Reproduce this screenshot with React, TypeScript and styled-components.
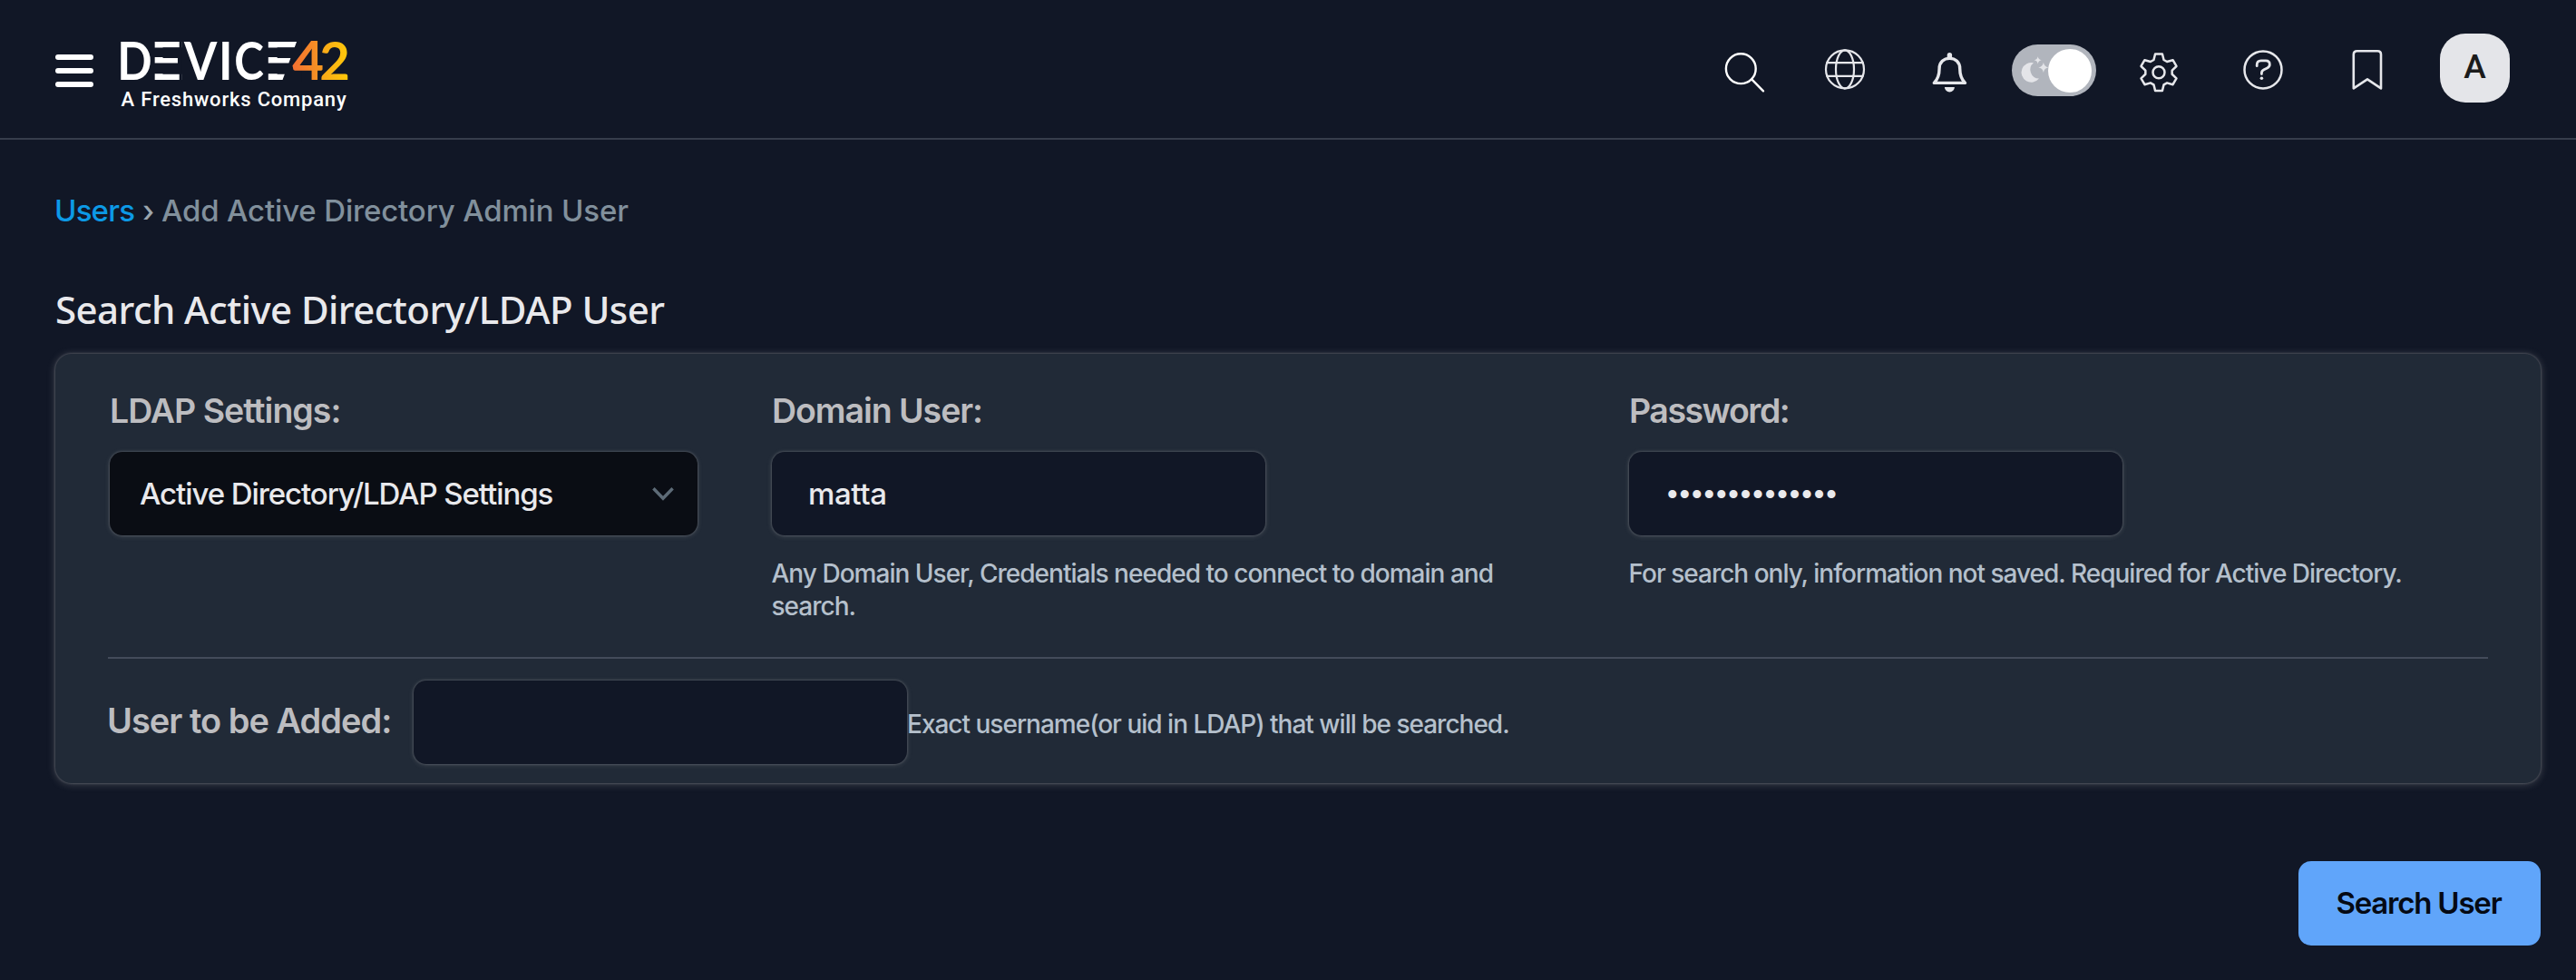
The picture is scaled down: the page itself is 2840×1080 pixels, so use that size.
import React from "react";
import styled, { createGlobalStyle } from "styled-components";

const color = {
  page: "#111726",
  card: "#212a37",
  line: "#363d4b",
  divider: "#434b5a",
  label: "#bdbdc0",
  text: "#e9e9ec",
  help: "#b5c0cc",
  icon: "#e6e7eb",
  link: "#0c9ae6",
  muted: "#81909c",
  select: "#0a0d14",
  primary: "#60a5fa",
};

const sans = `Inter, "Open Sans", sans-serif`;

const GlobalStyle = createGlobalStyle`
  *, *::before, *::after { box-sizing: border-box; }
  body { margin: 0; background: ${color.page}; font-family: ${sans}; color: ${color.text}; }
`;

const Page = styled.div`
  min-height: 1080px;
  display: flex;
  flex-direction: column;
  background: ${color.page};
`;

const Header = styled.header`
  height: 154px;
  border-bottom: 2px solid ${color.line};
  display: flex;
  align-items: center;
  padding: 0 73px 0 61px;
`;

const MenuButton = styled.button`
  display: flex;
  flex-direction: column;
  gap: 9px;
  width: 42px;
  margin: 4px 27px 0 0;
  padding: 0;
  border: 0;
  background: none;
`;

const MenuBar = styled.span`
  height: 6px;
  border-radius: 3px;
  background: #fff;
`;

const LogoSvg = styled.svg`
  display: block;
  margin-top: 8px;
  overflow: visible;
`;

const Actions = styled.nav`
  display: flex;
  align-items: center;
  margin-left: auto;
`;

const IconButton = styled.button<{ $after: number }>`
  display: block;
  width: 48px;
  height: 48px;
  margin: 0 ${(p) => p.$after}px 0 0;
  padding: 0;
  border: 0;
  background: none;
  color: ${color.icon};

  svg {
    display: block;
    overflow: visible;
  }
`;

const Toggle = styled.button`
  display: flex;
  align-items: center;
  width: 93px;
  height: 57px;
  margin: 3px 45px 0 0;
  padding: 0;
  border: 0;
  border-radius: 29px;
  background: #b1b5bd;

  svg {
    display: block;
    flex: none;
    overflow: visible;
  }
`;

const Knob = styled.span`
  flex: none;
  width: 48px;
  height: 48px;
  border-radius: 50%;
  background: #fff;
`;

const Avatar = styled.div`
  display: flex;
  align-items: center;
  justify-content: center;
  width: 77px;
  height: 76px;
  margin-top: -2px;
  padding-bottom: 3px;
  border-radius: 28px;
  background: #e4e5e9;
  color: #1b1b1b;
  font: 500 37px/40px Roboto, sans-serif;
`;

const Main = styled.main`
  display: flex;
  flex-direction: column;
  padding: 58px 39px 0 61px;
`;

const Breadcrumb = styled.div`
  display: flex;
  font-size: 33px;
  line-height: 40px;
  font-weight: 500;
  color: ${color.muted};
`;

const Crumb = styled.span<{ $spacing: number }>`
  letter-spacing: ${(p) => p.$spacing}px;
`;

const CrumbLink = styled.a`
  width: 97px;
  letter-spacing: -0.8px;
  color: ${color.link};
  margin-left: -1px;
`;

const Separator = styled.span`
  width: 21px;
  color: #9ba6ae;
`;

const Title = styled.h1`
  margin: 64px 0 24px;
  font: 500 42px/50px "Noto Sans", sans-serif;
  letter-spacing: -0.56px;
  color: ${color.text};
`;

const Card = styled.section`
  height: 473px;
  padding: 41px 58px 0;
  border-radius: 18px;
  background: ${color.card};
  box-shadow: 0 0 2px 1px rgba(190, 190, 190, 0.22), 0 1px 9px 1px rgba(190, 190, 190, 0.24);
`;

const Fields = styled.div`
  display: grid;
  grid-template-columns: 730px 945px 1fr;
  height: 293px;
  padding-left: 2px;
`;

const Field = styled.div`
  display: flex;
  flex-direction: column;
  align-items: flex-start;
`;

const Label = styled.label<{ $spacing?: number }>`
  margin: 0 0 23px;
  font-size: 37.5px;
  line-height: 44px;
  font-weight: 600;
  letter-spacing: ${(p) => p.$spacing ?? -1}px;
  white-space: nowrap;
  color: ${color.label};
`;

const Box = styled.div<{ $width: number; $dark?: boolean }>`
  display: flex;
  align-items: center;
  justify-content: space-between;
  flex: none;
  width: ${(p) => p.$width}px;
  height: 92px;
  padding: 0 26px 0 ${(p) => (p.$dark ? 33 : 40)}px;
  border-radius: 14px;
  background: ${(p) => (p.$dark ? color.select : color.page)};
  box-shadow: 0 0 2px 1px rgba(190, 190, 190, 0.18), 0 1px 5px 1px rgba(190, 190, 190, 0.15);
`;

const Value = styled.span<{ $spacing: number }>`
  font-size: 33px;
  line-height: 40px;
  font-weight: 500;
  letter-spacing: ${(p) => p.$spacing}px;
`;

const Dots = styled.span`
  margin: 2px 0 0 2px;
  font: 33px/40px "Liberation Sans", sans-serif;
  letter-spacing: 1.92px;
`;

const Help = styled.p<{ $spacing?: number }>`
  max-width: 860px;
  margin: 24px 0 0 -0.5px;
  font-size: 28px;
  line-height: 36px;
  font-weight: 500;
  letter-spacing: ${(p) => p.$spacing ?? -1}px;
  color: ${color.help};
`;

const Divider = styled.hr`
  height: 2px;
  margin: 0;
  border: 0;
  background: ${color.divider};
`;

const UserRow = styled.div`
  display: flex;
  align-items: center;
  height: 139px;
`;

const UserLabel = styled(Label)`
  width: 338px;
  margin: 0 0 3px -1px;
  font-size: 38px;
`;

const RowHelp = styled(Help)`
  margin: 5px 0 0;
`;

const SearchButton = styled.button`
  align-self: flex-end;
  width: 267px;
  height: 93px;
  margin-top: 86px;
  padding: 0 2px 2px 0;
  border: 0;
  border-radius: 14px;
  background: ${color.primary};
  color: #050a14;
  font: 600 33px/40px ${sans};
  letter-spacing: -1.2px;
`;

function Logo() {
  return (
    <LogoSvg width="258" height="112" viewBox="130 24 258 112" fontFamily="Lato, sans-serif" fontWeight="700" fontSize="58" fill="#fff">
      <defs>
        <linearGradient id="four" x1="0" x2="1">
          <stop offset="0" stopColor="#f36f32" />
          <stop offset="1" stopColor="#f69a20" />
        </linearGradient>
        <linearGradient id="two" x1="0" x2="1">
          <stop offset="0" stopColor="#f9a51a" />
          <stop offset="1" stopColor="#ffcb08" />
        </linearGradient>
      </defs>
      <text transform="translate(129.2 87.7) scale(.87 1)">D</text>
      <text transform="translate(165.4 87.7) scale(1.12 1)">E</text>
      <text transform="translate(202.9 87.7) scale(.9 1)">V</text>
      <text transform="translate(240.9 87.7) scale(.9 1)">I</text>
      <text transform="translate(258.3 87.7) scale(.85 1)">C</text>
      <text transform="translate(289.9 87.7) scale(1.25 1)">E</text>
      <g fill={color.page}>
        <path d="M169 52.6h31v10.4h-31zM169 69.4h31v11.8h-31zM197.7 44h3v46h-3z" />
        <path d="M294 52.6h36v10.4h-36zM294 69.4h36v11.8h-36zM327.8 44h5v46h-22z" />
      </g>
      <text transform="translate(322.3 88.4)" fontSize="60" fill="url(#four)">4</text>
      <text transform="translate(352.3 87.7)" fill="url(#two)">2</text>
      <text x="133.6" y="116.6" fontFamily="Roboto, sans-serif" fontWeight="500" fontSize="22" letterSpacing="0.8">A Freshworks Company</text>
    </LogoSvg>
  );
}

function gearPath(cx: number, cy: number) {
  const pts: string[] = [];
  for (let k = 0; k < 6; k++) {
    for (const [a, r] of [[-11, 20.6], [11, 20.6], [22, 14.8], [38, 14.8]]) {
      const t = ((k * 60 + a) * Math.PI) / 180;
      pts.push(`${(cx + r * Math.sin(t)).toFixed(2)} ${(cy - r * Math.cos(t)).toFixed(2)}`);
    }
  }
  return `M${pts.join("L")}Z`;
}

const stroke = { fill: "none", stroke: "currentColor", strokeLinejoin: "round", strokeLinecap: "round" } as const;

const SearchIcon = () => (
  <svg width="48" height="48" {...stroke} stroke="#fff" strokeWidth="2.4">
    <circle cx="19.3" cy="23.7" r="16.4" />
    <path d="M31.2 35.4L44 48.3" />
  </svg>
);

const GlobeIcon = () => (
  <svg width="48" height="48" {...stroke} strokeWidth="2.2">
    <circle cx="24" cy="24.4" r="21" />
    <ellipse cx="24" cy="24.4" rx="10" ry="21" />
    <path d="M4.3 17.1H43.7M4.3 31.8H43.7" />
  </svg>
);

const BellIcon = () => (
  <svg width="48" height="48" {...stroke} strokeWidth="3.4">
    <path d="M7.3 39.4C11.6 35.2 13.1 30 13.1 23.5C13.1 16.5 18 12.4 24.4 12.4C30.8 12.4 35.7 16.5 35.7 23.5C35.7 30 37.2 35.2 41.5 39.4Z" />
    <path d="M24.4 8.8V11" strokeWidth="5.4" />
    <path d="M18.9 44H29.9a5.5 5.4 0 0 1-11 0Z" fill="currentColor" stroke="none" />
  </svg>
);

const MoonIcon = () => (
  <svg width="40" height="57" fill="#e4e5e9">
    <path d="M24 20.2A10.9 10.9 0 1 0 30 37.6A9.8 9.8 0 0 1 24 20.2Z" />
    <path d="M28.7 13.2q.6 3.5 4 4.1q-3.4.6-4 4.1q-.6-3.5-4-4.1q3.4-.6 4-4.1Z" />
    <path d="M34.9 19.7q.8 4.8 5.6 5.6q-4.8.8-5.6 5.6q-.8-4.8-5.6-5.6q4.8-.8 5.6-5.6Z" />
  </svg>
);

const GearIcon = () => (
  <svg width="48" height="48" {...stroke} strokeWidth="2.5">
    <path d={gearPath(24, 27.7)} />
    <circle cx="24" cy="27.7" r="6.5" />
  </svg>
);

const HelpIcon = () => (
  <svg width="48" height="48" {...stroke} strokeWidth="2.5">
    <circle cx="24" cy="24.9" r="20.5" />
    <path d="M17.2 20.7V19.5Q17.2 14.9 21.8 14.9H27Q31.3 14.9 31.3 19Q31.3 21.7 28.6 23L25 24.7Q22.4 26 22.4 28.4V29.6" strokeWidth="2.8" />
    <circle cx="22.4" cy="34.3" r="1.8" fill="currentColor" stroke="none" />
  </svg>
);

const BookmarkIcon = () => (
  <svg width="48" height="48" {...stroke} strokeWidth="2.6">
    <path d="M8.8 45.4V8Q8.8 4.2 12.6 4.2H35.2Q39 4.2 39 8V45.4L24 35.4Z" />
  </svg>
);

export default function App() {
  return (
    <Page>
      <GlobalStyle />
      <Header>
        <MenuButton aria-label="Menu">
          <MenuBar />
          <MenuBar />
          <MenuBar />
        </MenuButton>
        <Logo />
        <Actions>
          <IconButton $after={62}><SearchIcon /></IconButton>
          <IconButton $after={67}><GlobeIcon /></IconButton>
          <IconButton $after={45}><BellIcon /></IconButton>
          <Toggle>
            <MoonIcon />
            <Knob />
          </Toggle>
          <IconButton $after={67}><GearIcon /></IconButton>
          <IconButton $after={67}><HelpIcon /></IconButton>
          <IconButton $after={56}><BookmarkIcon /></IconButton>
          <Avatar>A</Avatar>
        </Actions>
      </Header>
      <Main>
        <Breadcrumb>
          <CrumbLink>Users</CrumbLink>
          <Separator>›</Separator>
          <Crumb $spacing={-0.16}>Add Active Directory Admin User</Crumb>
        </Breadcrumb>
        <Title>Search Active Directory/LDAP User</Title>
        <Card>
          <Fields>
            <Field>
              <Label>LDAP Settings:</Label>
              <Box $width={648} $dark>
                <Value $spacing={-1.08}>Active Directory/LDAP Settings</Value>
                <svg width="24" height="16" fill="none" stroke="#5d6b77" strokeWidth="3.4">
                  <path d="M1.4 2.2L12 13.2L22.6 2.2" />
                </svg>
              </Box>
            </Field>
            <Field>
              <Label $spacing={-1.05}>Domain User:</Label>
              <Box $width={544}>
                <Value $spacing={-0.4}>matta</Value>
              </Box>
              <Help $spacing={-0.98}>Any Domain User, Credentials needed to connect to domain and search.</Help>
            </Field>
            <Field>
              <Label $spacing={-1.5}>Password:</Label>
              <Box $width={544}>
                <Dots>••••••••••••••</Dots>
              </Box>
              <Help>For search only, information not saved. Required for Active Directory.</Help>
            </Field>
          </Fields>
          <Divider />
          <UserRow>
            <UserLabel>User to be Added:</UserLabel>
            <Box $width={544} />
            <RowHelp>Exact username(or uid in LDAP) that will be searched.</RowHelp>
          </UserRow>
        </Card>
        <SearchButton>Search User</SearchButton>
      </Main>
    </Page>
  );
}
